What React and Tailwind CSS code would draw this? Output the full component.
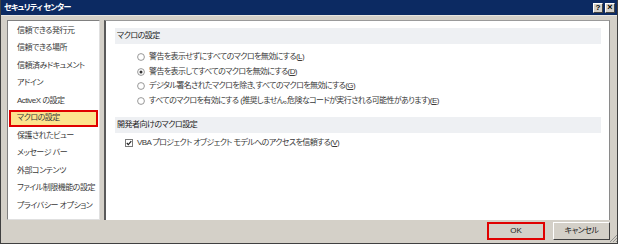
import React from 'react'

const menu = [
  '信頼できる発行元',
  '信頼できる場所',
  '信頼済みドキュメント',
  'アドイン',
  'ActiveX の設定',
  'マクロの設定',
  '保護されたビュー',
  'メッセージ バー',
  '外部コンテンツ',
  'ファイル制限機能の設定',
  'プライバシー オプション',
]

const options = [
  { text: '警告を表示せずにすべてのマクロを無効にする', key: 'L' },
  { text: '警告を表示してすべてのマクロを無効にする', key: 'D', checked: true },
  { text: 'デジタル署名されたマクロを除き、すべてのマクロを無効にする', key: 'G' },
  { text: 'すべてのマクロを有効にする (推奨しません。危険なコードが実行される可能性があります)', key: 'E' },
]

function Radio({ checked }) {
  return (
    <svg width="8" height="8" viewBox="0 0 8 8" className="shrink-0">
      <circle cx="4" cy="4" r="3.4" fill="#fff" stroke="#8c8c8c" strokeWidth="0.9" />
      {checked && <circle cx="4" cy="4" r="1.5" fill="#333" />}
    </svg>
  )
}

export default function App() {
  return (
    <div className="w-[618px] h-[244px] flex flex-col bg-[#d4d0c8] border-x border-b border-[#404040] font-['Liberation_Sans','Noto_Sans_CJK_JP',sans-serif] text-[8px] text-[#3a3a3a] [font-feature-settings:'palt'] whitespace-nowrap">
      {/* title bar */}
      <div className="h-[15px] shrink-0 bg-[#0c2a62] flex items-center justify-between pl-[3px] pr-[2px]">
        <span className="text-white font-bold text-[8px] tracking-[-0.7px]">セキュリティ センター</span>
        <div className="flex gap-[2px]">
          <div className="w-[10px] h-[10px] bg-[#d4d0c8] border border-t-white border-l-white border-r-[#404040] border-b-[#404040] flex items-center justify-center text-[8px] font-bold text-black leading-none">?</div>
          <div className="w-[10px] h-[10px] bg-[#d4d0c8] border border-t-white border-l-white border-r-[#404040] border-b-[#404040] flex items-center justify-center text-[9px] font-bold text-black leading-none">×</div>
        </div>
      </div>

      <div className="flex-1 flex flex-col pl-[6px] pr-[7px] pt-[4px] border-t border-[#e8e6e0]">
        <div className="flex gap-[4px] h-[200px]">
          {/* left nav */}
          <div className="w-[93px] bg-white border border-t-[#808080] border-l-[#808080] border-r-[#e0e0e0] border-b-[#e0e0e0] pt-[1px] px-[1px]">
            {menu.map((m) => (
              <div
                key={m}
                className={
                  m === 'マクロの設定'
                    ? 'h-[17.5px] flex items-center pl-[6px] bg-[#fde38e] border-2 border-[#e00000] tracking-[-0.5px]'
                    : 'h-[17.5px] flex items-center pl-[8px] tracking-[-0.5px]'
                }
              >
                {m}
              </div>
            ))}
          </div>

          {/* main panel */}
          <div className="flex-1 bg-white border-t border-l-2 border-r border-t-[#9a9a9a] border-l-[#5a5a5a] border-r-[#8a8a8a] pl-[9px] pr-[8px] pt-[7px]">
            <div className="h-[16px] bg-[#eef0f3] flex items-center pl-[2px] text-[#222] tracking-[-0.5px]">マクロの設定</div>
            <div className="pl-[22px] pt-[6px] flex flex-col">
              {options.map((o) => (
                <div key={o.key} className="h-[14.5px] flex items-center gap-[4px] tracking-[-0.6px]">
                  <Radio checked={o.checked} />
                  <span>
                    {o.text}(<span className="underline">{o.key}</span>)
                  </span>
                </div>
              ))}
            </div>
            <div className="h-[16px] mt-[9px] bg-[#eef0f3] flex items-center pl-[2px] text-[#222] tracking-[-0.5px]">開発者向けのマクロ設定</div>
            <div className="pl-[10px] pt-[4px] flex items-center gap-[4px] tracking-[-0.6px]">
              <svg width="8" height="8" viewBox="0 0 8 8" className="shrink-0">
                <rect x="0.5" y="0.5" width="7" height="7" fill="#fff" stroke="#7a7a7a" />
                <path d="M1.8 4 L3.3 5.6 L6.3 2.2" fill="none" stroke="#222" strokeWidth="1.2" />
              </svg>
              <span>
                VBA プロジェクト オブジェクト モデルへのアクセスを信頼する(<span className="underline">V</span>)
              </span>
            </div>
          </div>
        </div>

        {/* buttons */}
        <div className="flex justify-end gap-[8px] pt-[2px] relative">
          <button className="w-[58px] h-[18px] bg-[#d4d0c8] border-2 border-[#e00000] text-[8px] text-[#222] flex items-center justify-center">OK</button>
          <button className="w-[57px] h-[18px] bg-[#d4d0c8] border border-t-white border-l-white border-r-[#404040] border-b-[#404040] text-[8px] text-[#222] flex items-center justify-center tracking-[-0.5px]">キャンセル</button>
          <svg width="7" height="7" viewBox="0 0 7 7" className="absolute right-[-7px] bottom-[-2px]">
            <path d="M7 0 L0 7 M7 3 L3 7 M7 6 L6 7" stroke="#808080" strokeWidth="0.8" />
          </svg>
        </div>
      </div>
    </div>
  )
}
